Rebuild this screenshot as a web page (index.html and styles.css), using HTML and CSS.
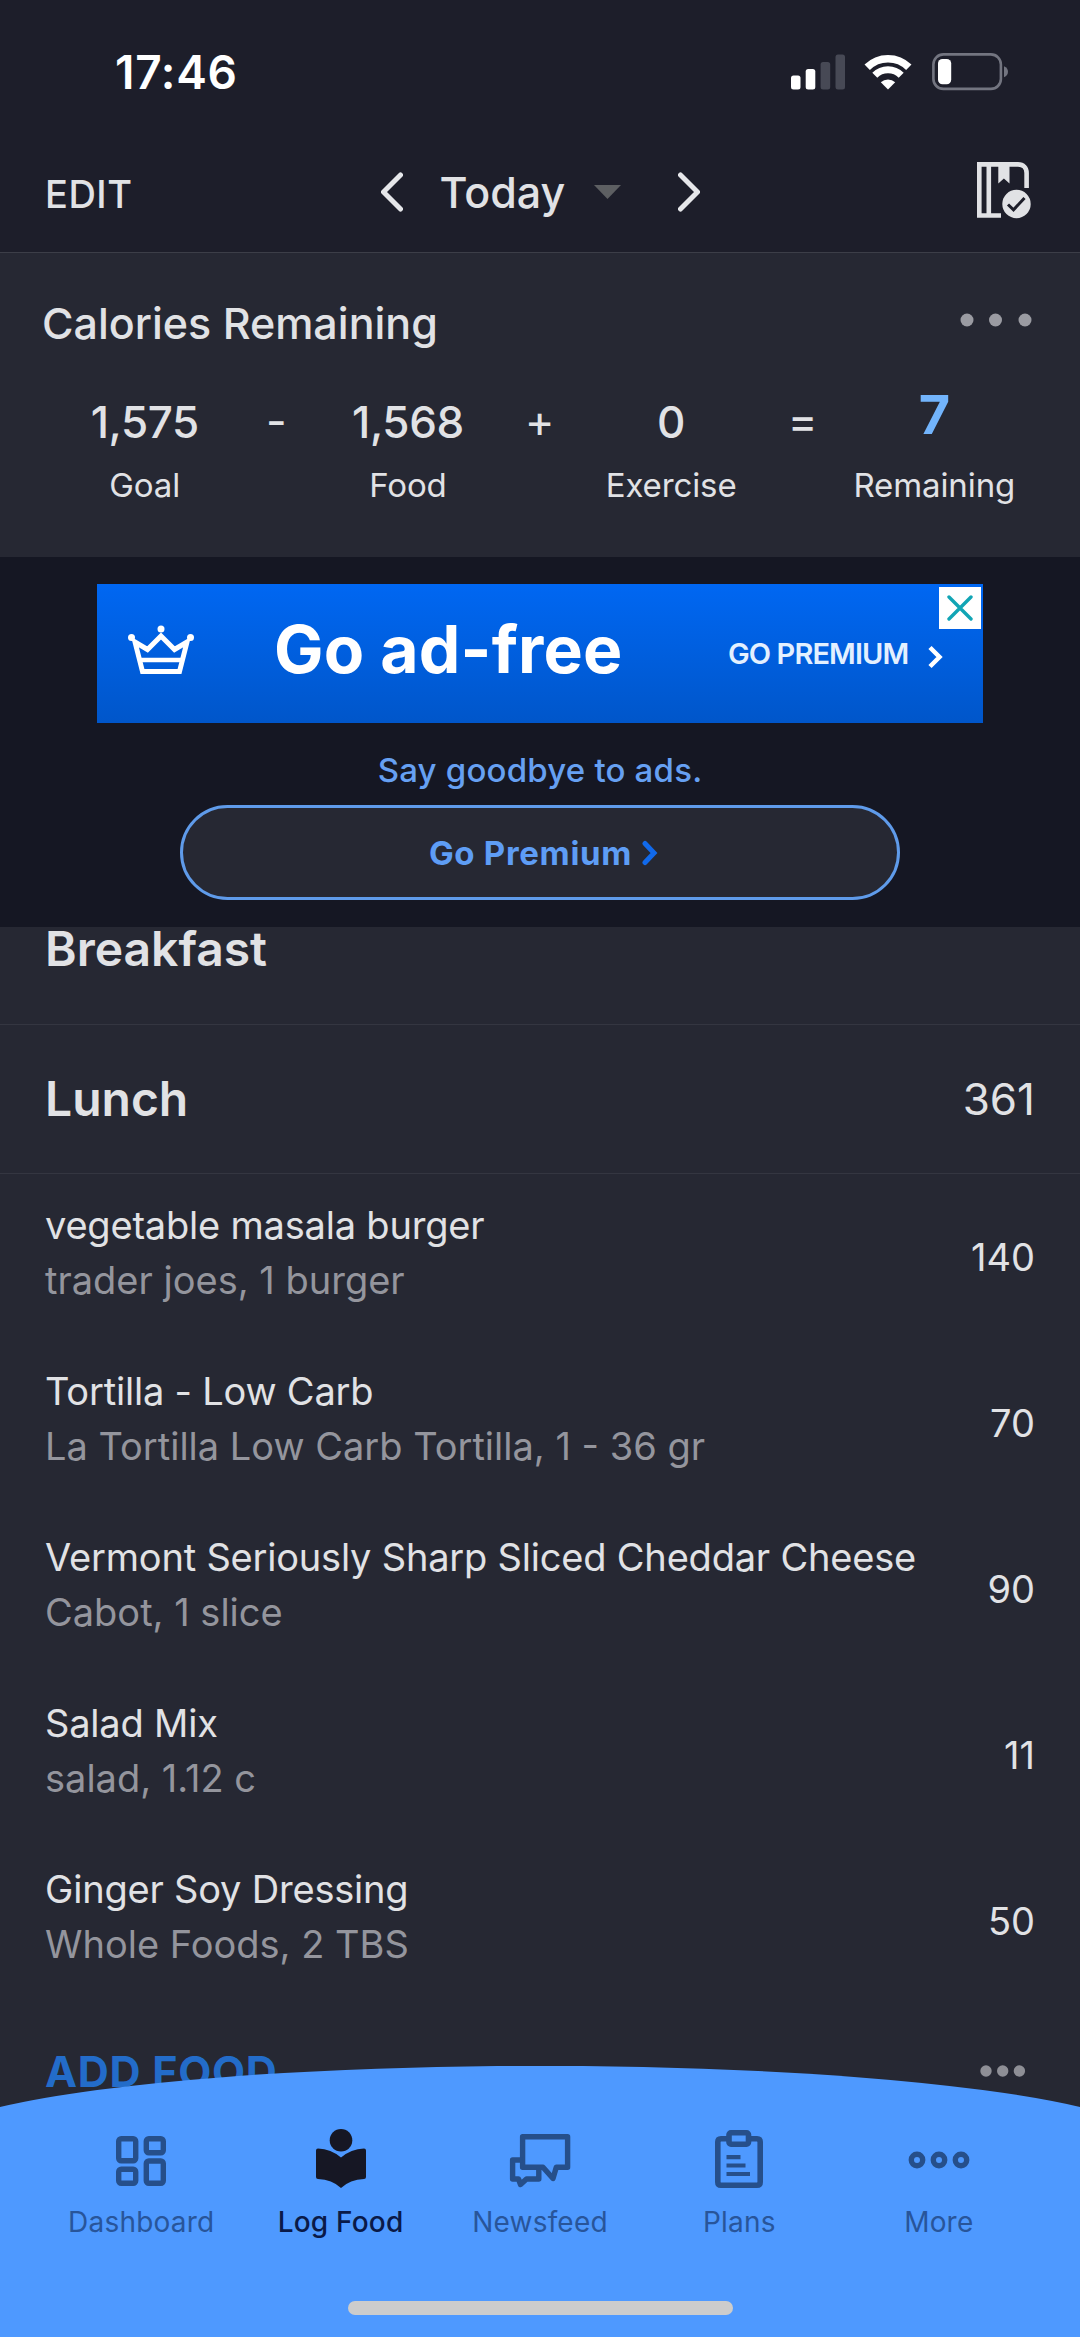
FILE: index.html
```html
<!DOCTYPE html>
<html lang="en">
<head>
<meta charset="utf-8">
<title>Log Food</title>
<link rel="stylesheet" href="styles.css">
</head>
<body>
<div class="app">
  <div class="status">
    <span class="time">17:46</span>
    <div class="status-icons">
      <svg class="signal" width="54" height="36" viewBox="0 0 54 36" fill="#fff"><rect x="0" y="21.5" width="9.5" height="14" rx="2.5"/><rect x="14.7" y="15" width="9.6" height="20.5" rx="2.5"/><g fill="#474955"><rect x="29.6" y="8" width="9.6" height="27.5" rx="2.5"/><rect x="44.5" y="0.5" width="9.5" height="35" rx="2.5"/></g></svg>
      <svg class="wifi" width="48" height="36" viewBox="0 0 48 36" fill="none" stroke="#fff"><path d="M3.2 13.3A29.5 29.5 0 0 1 44.8 13.3" stroke-width="7.6"/><path d="M10.800 21.3A18.5 18.5 0 0 1 37.2 21.3" stroke-width="7"/><path d="M24 35.5L16.8 28.3A10.5 10.5 0 0 1 31.2 28.3Z" fill="#fff" stroke="none"/></svg>
      <svg class="battery" width="77" height="38" viewBox="0 0 77 38"><rect x="1.4" y="1.4" width="67.5" height="34.5" rx="10" fill="none" stroke="#737580" stroke-width="2.6"/><rect x="6" y="6" width="13.2" height="25.3" rx="4.5" fill="#fff"/><path d="M72 13.2c5.3 1.8 5.3 9.2 0 11z" fill="#737580"/></svg>
    </div>
  </div>

  <header class="header">
    <span class="edit">EDIT</span>
    <div class="date-nav">
      <svg class="prev" width="22" height="40" viewBox="0 0 22 40"><path d="M19.5 3L2.5 20L19.5 37"/></svg>
      <span class="date">Today</span>
      <svg class="caret" width="27" height="14" viewBox="0 0 27 14"><path d="M0 0H27L13.5 14Z" fill="#5d5f62"/></svg>
      <svg class="next" width="22" height="40" viewBox="0 0 22 40"><path d="M2.5 3L19.5 20L2.5 37"/></svg>
    </div>
    <svg class="diary" width="54" height="57" viewBox="0 0 54 57" fill="none" stroke="#e1e2e5"><path d="M24 53.5H2.3V2.4H41C46.5 2.4 49.6 6 49.6 11V26" stroke-width="4.6"/><path d="M11.8 2V53" stroke-width="4.6"/><path d="M21.3 2H32.5V21.5L26.9 16.5L21.3 21.5Z" fill="#e1e2e5" stroke="none"/><circle cx="39.5" cy="42" r="14.2" fill="#e1e2e5" stroke="none"/><path d="M31 42.5L36.5 47.8L47.5 36" stroke="#1d1e2a" stroke-width="3"/></svg>
  </header>

  <section class="summary">
    <div class="summary-head">
      <h1>Calories Remaining</h1>
      <svg class="dots-lg" width="72" height="14" viewBox="0 0 72 14" fill="#9a9ba2"><circle cx="7" cy="7" r="6.5"/><circle cx="35.5" cy="7" r="6.5"/><circle cx="65" cy="7" r="6.5"/></svg>
    </div>
    <div class="equation">
      <div class="term"><b>1,575</b><span>Goal</span></div>
      <i>-</i>
      <div class="term"><b>1,568</b><span>Food</span></div>
      <i>+</i>
      <div class="term"><b>0</b><span>Exercise</span></div>
      <i>=</i>
      <div class="term result"><b>7</b><span>Remaining</span></div>
    </div>
  </section>

  <section class="promo">
    <div class="banner">
      <svg class="crown" width="68" height="50" viewBox="0 0 68 50" fill="none" stroke="#fff" stroke-width="5"><path d="M8 17L15.5 46.5H52.5L60 17L47.5 24.5L34 11L20.5 24.5Z"/><path d="M12.500 35H55.500" stroke-width="4.5"/><g fill="#fff" stroke="none"><circle cx="34" cy="4" r="3.5"/><circle cx="4.5" cy="12.500" r="3.5"/><circle cx="63.5" cy="12.5" r="3.5"/></g></svg>
      <span class="banner-title">Go ad-free</span>
      <span class="banner-cta">GO PREMIUM</span>
      <svg class="banner-chev" width="15" height="24" viewBox="0 0 15 24"><path d="M2 2.5L11.5 12L2 21.5" fill="none" stroke="#fff" stroke-width="4.5"/></svg>
      <span class="close"><svg width="26" height="26" viewBox="0 0 26 26"><path d="M2 2L24 24M24 2L2 24" stroke="#11a5b5" stroke-width="3.4" stroke-linecap="round"/></svg></span>
    </div>
    <p class="tagline">Say goodbye to ads.</p>
    <div class="premium"><span>Go Premium</span><svg width="16" height="26" viewBox="0 0 16 26"><path d="M3 3.5L12 13L3 22.5" fill="none" stroke="#1169ea" stroke-width="5" stroke-linecap="round"/></svg></div>
  </section>

  <main class="diary-list">
    <div class="meal cut"><h2>Breakfast</h2></div>
    <div class="meal"><h2>Lunch</h2><span>361</span></div>
    <div class="food"><div class="info"><p>vegetable masala burger</p><p class="sub">trader joes, 1 burger</p></div><span>140</span></div>
    <div class="food"><div class="info"><p>Tortilla - Low Carb</p><p class="sub">La Tortilla Low Carb Tortilla, 1 - 36 gr</p></div><span>70</span></div>
    <div class="food"><div class="info"><p>Vermont Seriously Sharp Sliced Cheddar Cheese</p><p class="sub">Cabot, 1 slice</p></div><span>90</span></div>
    <div class="food"><div class="info"><p>Salad Mix</p><p class="sub">salad, 1.12 c</p></div><span>11</span></div>
    <div class="food"><div class="info"><p>Ginger Soy Dressing</p><p class="sub">Whole Foods, 2 TBS</p></div><span>50</span></div>
    <div class="add"><span>ADD FOOD</span><svg width="46" height="12" viewBox="0 0 46 12" fill="#8e8f96"><circle cx="6" cy="6" r="5.7"/><circle cx="22.7" cy="6" r="5.7"/><circle cx="39.4" cy="6" r="5.7"/></svg></div>
  </main>

  <nav class="tabbar">
    <svg class="curve" width="1080" height="271" viewBox="0 0 1080 271"><path d="M0 41A615 79 0 0 1 1080 41V271H0Z" fill="#4e99ff"/></svg>
    <div class="tabs">
      <div class="tab"><svg width="64" height="64" viewBox="0 0 64 64" fill="none" stroke="#264f8a" stroke-width="5.4"><rect x="9.7" y="10.7" width="17" height="22" rx="2.5"/><rect x="37.3" y="10.7" width="17" height="14" rx="2.5"/><rect x="9.7" y="41.3" width="17" height="14" rx="2.5"/><rect x="37.3" y="33" width="17" height="22.3" rx="2.5"/></svg><span>Dashboard</span></div>
      <div class="tab active"><svg width="64" height="64" viewBox="0 0 64 64" fill="#161724"><circle cx="32" cy="12.3" r="11.3"/><path d="M7 22.5Q7 20.5 9 20.5Q22 21 32 29.5Q42 21 55 20.5Q57 20.5 57 22.5V49Q57 51 55 51Q41 51.5 32 60Q23 51.5 9 51Q7 51 7 49Z"/></svg><span>Log Food</span></div>
      <div class="tab"><svg width="64" height="64" viewBox="0 0 64 64" fill="none" stroke="#264f8a" stroke-width="5.4" stroke-linejoin="round"><path d="M14.6 8.8H59.6V39.3H48.3L45 50.5L35 39.3H14.6Z"/><path d="M14.6 32H4.6V51H10.5L12.5 56.5L18.500 51H30.8V40"/></svg><span>Newsfeed</span></div>
      <div class="tab"><svg width="64" height="64" viewBox="0 0 64 64" fill="none" stroke="#264f8a" stroke-width="5.6"><path d="M21 10.8H14Q10.8 10.8 10.8 14V54Q10.8 57.2 14 57.2H50Q53.2 57.2 53.2 54V14Q53.2 10.8 50 10.8H43"/><rect x="22" y="4.8" width="19.5" height="11.4" rx="2"/><path d="M19.5 29.2H33.5M19.5 37.5H38.5M19.5 46H43" stroke-width="4.2"/></svg><span>Plans</span></div>
      <div class="tab"><svg width="64" height="64" viewBox="0 0 64 64" fill="none" stroke="#264f8a" stroke-width="5.4"><circle cx="10" cy="32" r="5.7"/><circle cx="32" cy="32" r="5.7"/><circle cx="54" cy="32" r="5.7"/></svg><span>More</span></div>
    </div>
    <div class="home"></div>
  </nav>
</div>
</body>
</html>
```
FILE: styles.css
```css
* { box-sizing: border-box; margin: 0; padding: 0; }
html, body { width: 1080px; height: 2337px; overflow: hidden; }
body { background: #262833; font-family: Inter, "Liberation Sans", sans-serif; color: #e1e2e5; }
svg { display: block; flex: none; }
span, p, h1, h2, b, i { white-space: nowrap; }
.app { position: relative; width: 1080px; height: 2337px; overflow: hidden; display: flex; flex-direction: column; }

.status { height: 138px; padding: 6px 71px 0 115px; background: #1d1e2a; display: flex; align-items: center; justify-content: space-between; color: #fff; }
.time { font-size: 46px; font-weight: 600; letter-spacing: 0.7px; }
.status-icons { display: flex; align-items: center; }
.wifi { margin-left: 19px; }
.battery { margin-left: 20px; }

.header { height: 115px; padding: 0 45px 6px; background: #1d1e2a; border-bottom: 1px solid #3c3e48; display: grid; grid-template-columns: 1fr auto 1fr; align-items: center; }
.edit { font-size: 38px; font-weight: 500; letter-spacing: 0.5px; padding-top: 4px; }
.date-nav { display: flex; align-items: center; }
.date { font-size: 43px; font-weight: 460; width: 124px; margin: 0 30px 0 37px; }
.prev, .next { fill: none; stroke: #e6e7ea; stroke-width: 5; stroke-linecap: round; stroke-linejoin: round; }
.next { margin-left: 57px; }
.diary { justify-self: end; margin: 0 4px 3px 0; }

.summary { height: 304px; padding-top: 40px; }
.summary-head { height: 60px; padding: 0 48px 0 42px; display: flex; align-items: center; justify-content: space-between; }
.summary h1 { font-size: 43px; font-weight: 470; letter-spacing: 0; }
.dots-lg { margin-bottom: 6px; }
.equation { margin: 39px 0 0 57px; display: grid; grid-template-columns: 175.5px 87.7px 175.5px 87.7px 175.5px 87.7px 175.5px; }
.term { display: flex; flex-direction: column; align-items: center; }
.term b { font-size: 44px; font-weight: 470; letter-spacing: -0.4px; line-height: 60px; }
.term span { font-size: 33px; letter-spacing: -0.1px; line-height: 40px; margin-top: 13px; }
.equation i { font-style: normal; font-size: 45px; line-height: 58px; text-align: center; }
.result b { color: #72b4fc; font-size: 54px; font-weight: 750; line-height: 46px; padding-bottom: 14px; }

.promo { height: 370px; background: #151723; padding-top: 27px; display: flex; flex-direction: column; align-items: center; }
.banner { position: relative; width: 886px; height: 139px; background: linear-gradient(#0067f2, #0056ca); display: flex; align-items: center; color: #fff; }
.crown { margin: 0 0 8px 30px; }
.banner-title { font-size: 66px; font-weight: 700; letter-spacing: 0.2px; width: 350px; margin: 0 0 9px 79px; }
.banner-cta { font-size: 29px; font-weight: 600; letter-spacing: -0.9px; width: 180px; margin-left: 104px; color: #e3f0ff; }
.banner-chev { margin: 6px 0 0 20px; }
.close { position: absolute; top: 3px; right: 2px; width: 42px; height: 42px; background: #fff; display: flex; align-items: center; justify-content: center; }
.tagline { font-size: 33px; font-weight: 500; letter-spacing: 0.2px; line-height: 40px; margin-top: 27px; color: #66a0f2; }
.premium { width: 720px; height: 95px; margin-top: 15px; padding-left: 7px; border: 3px solid #5f9bea; border-radius: 48px; background: #262833; display: flex; align-items: center; justify-content: center; color: #5e9df5; }
.premium span { font-size: 33px; font-weight: 700; letter-spacing: 0.7px; margin-right: 10px; }

.diary-list { flex: 1; }
.meal { height: 149px; padding: 0 45px; border-bottom: 1px solid #343641; display: flex; align-items: center; justify-content: space-between; }
.meal.cut { height: 98px; align-items: flex-start; }
.meal h2 { font-size: 48px; font-weight: 600; line-height: 44px; }
.meal span { font-size: 44px; font-weight: 430; }
.food { height: 166px; padding: 0 45px; display: flex; align-items: center; justify-content: space-between; }
.info { margin-bottom: 9px; }
.info p { font-size: 38px; line-height: 55px; letter-spacing: -0.2px; }
.info .sub { color: #94959d; letter-spacing: 0; }
.food > span { font-size: 38px; }
.add { height: 134px; padding: 0 54px 0 45px; display: flex; align-items: center; justify-content: space-between; }
.add span { font-size: 43px; font-weight: 700; letter-spacing: 0.7px; color: #236cc9; }

.tabbar { position: absolute; left: 0; bottom: 0; width: 1080px; height: 271px; display: flex; flex-direction: column; align-items: center; }
.curve { position: absolute; left: 0; top: 0; }
.tabs { position: relative; width: 997px; margin-top: 62px; display: grid; grid-template-columns: repeat(5, 1fr); }
.tab { display: flex; flex-direction: column; align-items: center; color: #28559a; }
.tab span { font-size: 28px; line-height: 36px; letter-spacing: 0.2px; margin-top: 12px; }
.tab.active { color: #0a1a48; }
.tab.active span { font-weight: 500; }
.home { position: relative; width: 385px; height: 14px; margin-top: 61px; border-radius: 7px; background: #ccc; }
```
